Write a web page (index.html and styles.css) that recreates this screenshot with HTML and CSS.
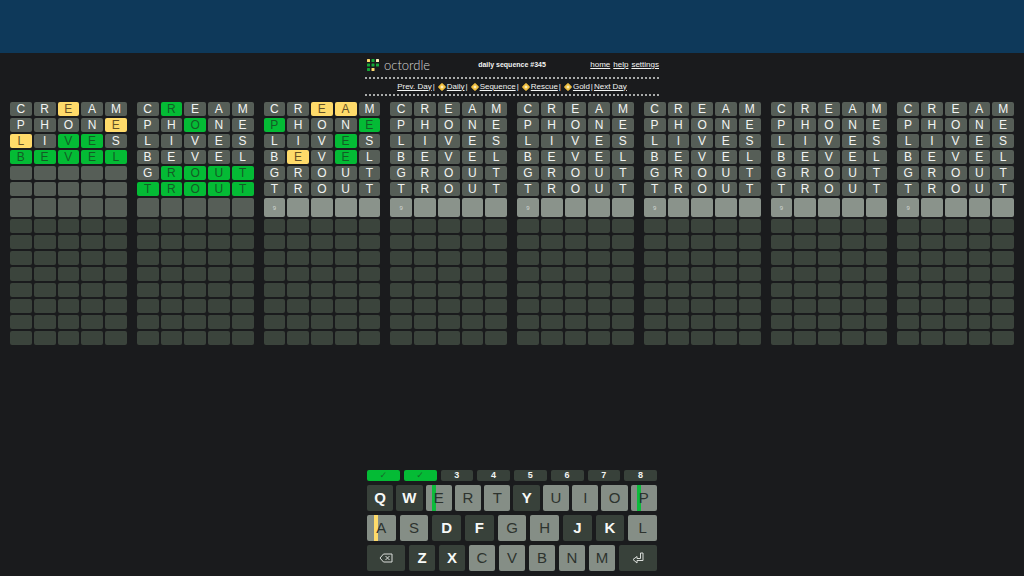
FILE: index.html
```html
<!DOCTYPE html>
<html lang="en">
<head>
<meta charset="utf-8">
<meta name="viewport" content="width=device-width, initial-scale=1">
<title>octordle - daily sequence #345</title>
<link rel="stylesheet" href="styles.css">
</head>
<body>
<div class="banner"></div>
<header class="top">
  <div class="title-row">
    <a class="brand" href="#">
      <svg class="brand-mark" viewBox="0 0 24 24" aria-hidden="true">
        <g fill="#15a838"><rect x="9" y="0" width="6" height="6" rx="1"/><rect x="0" y="9" width="6" height="6" rx="1"/><rect x="9" y="9" width="6" height="6" rx="1"/><rect x="18" y="9" width="6" height="6" rx="1"/><rect x="0" y="18" width="6" height="6" rx="1"/></g>
        <g fill="#ffdc70"><rect x="0" y="0" width="6" height="6" rx="1"/><rect x="9" y="18" width="6" height="6" rx="1"/></g>
        <rect x="18" y="0" width="6" height="6" rx="1" fill="#fff0bd"/>
      </svg>
      <span class="brand-name">octordle</span>
    </a>
    <h1 class="title">daily sequence #345</h1>
    <nav class="menu"><a href="#">home</a><a href="#">help</a><a href="#">settings</a></nav>
  </div>
  <nav class="modes">
    <a href="#">Prev. Day</a><span>|</span>
    <i class="gem"></i><a href="#">Daily</a><span>|</span>
    <i class="gem"></i><a href="#">Sequence</a><span>|</span>
    <i class="gem"></i><a href="#">Rescue</a><span>|</span>
    <i class="gem"></i><a href="#">Gold</a><span>|</span>
    <a href="#">Next Day</a>
  </nav>
</header>
<main class="boards" id="boards"></main>
<section class="keyboard" aria-label="Keyboard">
  <div class="keys tabs">
    <button class="tab done" aria-label="Board 1 solved">✓</button><button class="tab done" aria-label="Board 2 solved">✓</button><button class="tab">3</button><button class="tab">4</button><button class="tab">5</button><button class="tab">6</button><button class="tab">7</button><button class="tab">8</button>
  </div>
  <div class="keys tight">
    <button class="key">Q</button><button class="key">W</button><button class="key used green">E</button><button class="key used">R</button><button class="key used">T</button><button class="key">Y</button><button class="key used">U</button><button class="key used">I</button><button class="key used">O</button><button class="key used green">P</button>
  </div>
  <div class="keys">
    <button class="key used yellow">A</button><button class="key used">S</button><button class="key">D</button><button class="key">F</button><button class="key used">G</button><button class="key used">H</button><button class="key">J</button><button class="key">K</button><button class="key used">L</button>
  </div>
  <div class="keys">
    <button class="key wide" aria-label="Backspace"><svg class="key-icon" viewBox="0 0 14 10" aria-hidden="true"><path d="M4.5 1H13V9H4.5L1 5Z M6.5 3L10.5 7M10.5 3L6.5 7"/></svg></button>
    <button class="key">Z</button><button class="key">X</button><button class="key used">C</button><button class="key used">V</button><button class="key used">B</button><button class="key used">N</button><button class="key used">M</button>
    <button class="key wide" aria-label="Enter"><svg class="key-icon raised" viewBox="0 0 12 12" aria-hidden="true"><path d="M8.5 1H11V8.5H5V11L1 7.5L5 4.5V6.5H8.5Z"/></svg></button>
  </div>
</section>
<script src="boards.js"></script>
</body>
</html>
```

FILE: styles.css
```css
* { box-sizing: border-box; }

body {
  margin: 0;
  min-height: 100vh;
  display: flex;
  flex-direction: column;
  background: #1a1b1d;
  color: #f2f4f2;
  font-family: "Liberation Sans", Arial, sans-serif;
}

a { color: inherit; }

button {
  border: 0;
  padding: 0;
  margin: 0;
  font-family: inherit;
}

.banner { height: 53px; background: #0e395a; }

.top {
  width: 294px;
  max-width: 100%;
  margin: 0 auto;
  font-size: 8px;
  line-height: 8px;
}

.title-row {
  display: grid;
  grid-template-columns: 1fr auto 1fr;
  align-items: center;
  height: 26px;
  border-bottom: 2px dotted #a9abaa;
}

.brand {
  display: flex;
  align-items: center;
  gap: 5px;
  padding-left: 2px;
  text-decoration: none;
}

.brand-mark { width: 12px; height: 12px; }

.brand-name {
  color: #d5d7d5;
  font-family: Lato, "Liberation Sans", sans-serif;
  font-weight: 300;
  font-size: 13px;
  line-height: 14px;
}

.title { margin: 0; font-size: 7px; font-weight: 700; }

.menu { display: flex; justify-content: flex-end; gap: 3px; }

.modes {
  display: flex;
  align-items: center;
  justify-content: center;
  gap: 1px;
  height: 17px;
  border-bottom: 2px dotted #a9abaa;
}

.gem {
  width: 6px;
  height: 6px;
  margin: 0 1px 0 3px;
  border-radius: 1px;
  background: radial-gradient(#fff0b8 15%, #eebd3e 45%);
  transform: rotate(45deg);
}

.boards {
  display: grid;
  grid-template-columns: repeat(8, 1fr);
  gap: 10px;
  padding: 6px 10px 0;
}

.board {
  display: grid;
  grid-template-columns: repeat(5, 1fr);
  grid-template-rows: repeat(6, 14px) 19px repeat(8, 14px);
  gap: 2px;
}

.cell {
  border-radius: 2px;
  background: #3b443c;
  font-size: 12px;
  line-height: 15px;
  text-align: center;
}

.cell.past { background: #565e57; }
.cell.current { background: #8a938b; color: #d3d8d3; font-size: 6px; line-height: 20px; }
.cell.green { background: #04bb35; color: #145c26; }
.cell.yellow { background: #ffdb6a; color: #655227; }

.keyboard {
  width: 290px;
  max-width: 100%;
  margin: auto auto 0;
  padding-bottom: 5px;
  display: grid;
  gap: 4px;
}

.keys { display: flex; gap: 4px; }
.keys.tight { gap: 3px; }

.tab {
  flex: 1;
  height: 11px;
  border-radius: 2px;
  background: #38413a;
  color: #f2f4f2;
  font-size: 9px;
  font-weight: 700;
  line-height: 11px;
}

.tab.done {
  background: #04bb35;
  color: #17692a;
  font-family: "DejaVu Sans", sans-serif;
  font-weight: 400;
}

.key {
  flex: 1;
  height: 26px;
  border-radius: 2px;
  background: #38413a;
  color: #f7f9f7;
  font-size: 15px;
  font-weight: 700;
  line-height: 24px;
}

.key.used { background: #858e86; color: #2d332e; font-weight: 400; }

.key.green {
  background: linear-gradient(90deg, transparent 25%, #0dba3c 25%, #0dba3c 38%, transparent 38%) #858e86;
}

.key.yellow {
  background: linear-gradient(90deg, transparent 25%, #ffdb6a 25%, #ffdb6a 38%, transparent 38%) #858e86;
}

.key.wide {
  flex: 0 0 38px;
  display: flex;
  align-items: center;
  justify-content: center;
}

.key-icon {
  width: 14px;
  height: 10px;
  fill: none;
  stroke: #d9ddd9;
  stroke-width: 1;
}

.key-icon.raised { height: 12px; }
```

FILE: boards.js
```js
const guesses = ["CREAM", "PHONE", "LIVES", "BEVEL", "GROUT", "TROUT"];
const ROWS = 15;
const CURRENT = 6;

// One string per guess: g = right place, y = wrong place, - = absent.
const marks = [
  ["--y--", "----y", "y-gg-", "ggggg"],
  ["-g---", "--g--", "-----", "-----", "-gggg", "ggggg"],
  ["--yy-", "g---g", "---g-", "-y-g-", "-----", "-----"],
];
const solved = [true, true, false, false, false, false, false, false];

const container = document.getElementById("boards");

solved.forEach((isSolved, index) => {
  const board = document.createElement("div");
  board.className = "board";
  const rows = marks[index] || guesses.map(() => "-----");
  for (let r = 0; r < ROWS; r++) {
    for (let c = 0; c < 5; c++) {
      const cell = document.createElement("div");
      cell.className = "cell";
      if (r < CURRENT || (r === CURRENT && isSolved)) cell.classList.add("past");
      if (r === CURRENT && !isSolved) {
        cell.classList.add("current");
        if (c === 0) cell.textContent = "9";
      }
      if (r < rows.length) {
        cell.textContent = guesses[r][c];
        if (rows[r][c] === "g") cell.classList.add("green");
        if (rows[r][c] === "y") cell.classList.add("yellow");
      }
      board.append(cell);
    }
  }
  container.append(board);
});
```
